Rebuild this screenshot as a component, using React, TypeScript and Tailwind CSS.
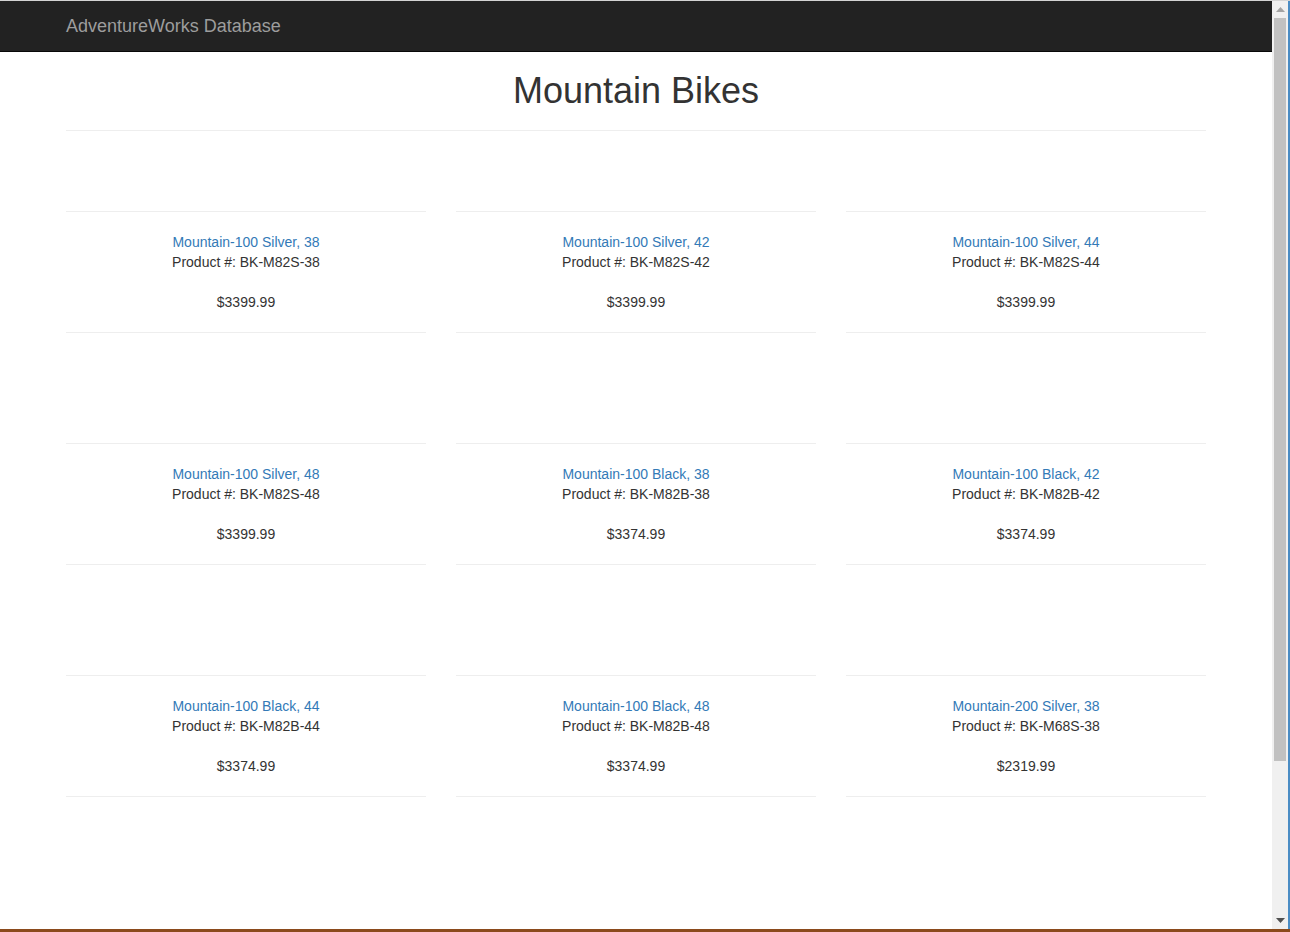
interface Product {
  name: string;
  number: string;
  price: string;
}

const products: Product[] = [
  { name: 'Mountain-100 Silver, 38', number: 'BK-M82S-38', price: '$3399.99' },
  { name: 'Mountain-100 Silver, 42', number: 'BK-M82S-42', price: '$3399.99' },
  { name: 'Mountain-100 Silver, 44', number: 'BK-M82S-44', price: '$3399.99' },
  { name: 'Mountain-100 Silver, 48', number: 'BK-M82S-48', price: '$3399.99' },
  { name: 'Mountain-100 Black, 38', number: 'BK-M82B-38', price: '$3374.99' },
  { name: 'Mountain-100 Black, 42', number: 'BK-M82B-42', price: '$3374.99' },
  { name: 'Mountain-100 Black, 44', number: 'BK-M82B-44', price: '$3374.99' },
  { name: 'Mountain-100 Black, 48', number: 'BK-M82B-48', price: '$3374.99' },
  { name: 'Mountain-200 Silver, 38', number: 'BK-M68S-38', price: '$2319.99' },
];

function ProductCard({ product }: { product: Product }) {
  return (
    <div className="flex flex-col">
      <hr className="border-0 border-t border-[#eeeeee]" />
      <div className="flex flex-col items-center py-5 text-[14px] leading-5 text-[#333333]">
        <a href="#" className="text-[#337ab7]">
          {product.name}
        </a>
        <p>Product #: {product.number}</p>
        <p className="mt-5">{product.price}</p>
      </div>
      <hr className="border-0 border-t border-[#eeeeee]" />
      <div className="h-[110px]" />
    </div>
  );
}

function Arrow({ up, color }: { up?: boolean; color: string }) {
  return (
    <svg width="9" height="5" viewBox="0 0 9 5" fill={color}>
      {up ? <polygon points="0,5 4.5,0 9,5" /> : <polygon points="0,0 9,0 4.5,5" />}
    </svg>
  );
}

function Scrollbar() {
  return (
    <div className="flex w-[16px] flex-col bg-[#f0f0f0]">
      <div className="flex h-[17px] items-center justify-center">
        <Arrow up color="#a3a3a3" />
      </div>
      <div className="mx-[2px] h-[743px] bg-[#c1c1c1]" />
      <div className="flex-1" />
      <div className="flex h-[17px] items-center justify-center">
        <Arrow color="#505050" />
      </div>
    </div>
  );
}

export default function App() {
  return (
    <div className="flex h-[932px] w-[1290px] flex-col overflow-hidden bg-white font-['Liberation_Sans',Arial,sans-serif]">
      <div className="h-px bg-[#d4d4d4]" />
      <div className="flex min-h-0 flex-1">
        <div className="flex-1 overflow-hidden">
          <nav className="h-[51px] border-b border-[#080808] bg-[#222222]">
            <div className="mx-auto w-[1170px] px-[15px]">
              <a href="#" className="block py-[15px] text-[18px] leading-5 text-[#9d9d9d]">
                AdventureWorks Database
              </a>
            </div>
          </nav>
          <main className="mx-auto w-[1170px] px-[15px]">
            <h1 className="mt-[19px] text-center text-[36px] leading-[1.1] text-[#333333]">
              Mountain Bikes
            </h1>
            <hr className="mt-[19px] mb-[80px] border-0 border-t border-[#eeeeee]" />
            <div className="grid grid-cols-3 gap-x-[30px]">
              {products.map((p) => (
                <ProductCard key={p.number} product={p} />
              ))}
            </div>
          </main>
        </div>
        <Scrollbar />
        <div className="w-[2px] bg-[#4a8cc4]" />
      </div>
      <div className="h-[3px] bg-[#8b4a1c]" />
    </div>
  );
}
